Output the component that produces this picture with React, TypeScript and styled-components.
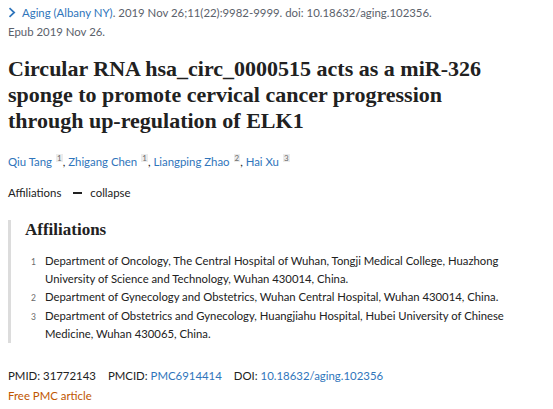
import React from "react";
import styled, { createGlobalStyle } from "styled-components";

const Global = createGlobalStyle`
  html, body { margin: 0; padding: 0; background: #fff; }
  body { font-family: Lato, "Liberation Sans", sans-serif; color: #212121; }
`;

const Page = styled.div`
  width: 504px;
  padding: 3px 8px 0 8px;
  display: flex;
  flex-direction: column;
`;

const Citation = styled.div`
  font-size: 11.4px;
  line-height: 19px;
  color: #5b616b;
`;

const Chevron = styled.span`
  display: inline-flex;
  width: 9px;
  margin-right: 5px;
  vertical-align: -1px;
`;

const Link = styled.a`
  color: #2f75bb;
  text-decoration: none;
`;

const Title = styled.h1`
  font-family: "Liberation Serif", serif;
  font-weight: 700;
  font-size: 22px;
  line-height: 26px;
  margin: 15px 0 0 0;
  color: #212121;
`;

const Authors = styled.div`
  margin-top: 18px;
  font-size: 11.4px;
  line-height: 19px;
`;

const Sup = styled.sup`
  display: inline-block;
  font-size: 8px;
  line-height: 8px;
  padding: 0 1px;
  margin-left: 4px;
  background: #ececec;
  color: #6b6b6b;
  vertical-align: 5px;
`;

const Toggle = styled.div`
  margin-top: 12px;
  font-size: 11.4px;
  line-height: 19px;
  color: #212121;
  display: flex;
  align-items: center;
`;

const Dash = styled.span`
  display: inline-block;
  width: 9px;
  height: 2px;
  margin: 1px 8px 0 12px;
  background: #212121;
`;

const AffBox = styled.div`
  margin-top: 18px;
  border-left: 3px solid #dcdcdc;
  padding: 0 0 0 14px;
`;

const AffHeading = styled.h3`
  font-family: "Liberation Serif", serif;
  font-weight: 700;
  font-size: 17px;
  line-height: 20px;
  margin: 0 0 12px 0;
`;

const AffList = styled.ol`
  list-style: none;
  margin: 0;
  padding: 0;
`;

const AffItem = styled.li`
  display: flex;
  font-size: 11.3px;
  line-height: 18px;
`;

const AffNum = styled.span`
  flex: 0 0 auto;
  width: 20px;
  padding-left: 6px;
  padding-top: 1px;
  font-size: 8.5px;
  color: #6b6b6b;
  box-sizing: border-box;
`;

const Ids = styled.div`
  margin-top: 23px;
  font-size: 11.4px;
  line-height: 20px;
  display: flex;
  gap: 12px;
`;

const Free = styled.div`
  font-size: 11.4px;
  line-height: 20px;
  color: #c05600;
`;

const authors = [
  ["Qiu Tang", "1"],
  ["Zhigang Chen", "1"],
  ["Liangping Zhao", "2"],
  ["Hai Xu", "3"],
];

const affs = [
  "Department of Oncology, The Central Hospital of Wuhan, Tongji Medical College, Huazhong University of Science and Technology, Wuhan 430014, China.",
  "Department of Gynecology and Obstetrics, Wuhan Central Hospital, Wuhan 430014, China.",
  "Department of Obstetrics and Gynecology, Huangjiahu Hospital, Hubei University of Chinese Medicine, Wuhan 430065, China.",
];

export default function App() {
  return (
    <>
      <Global />
      <Page>
        <Citation>
          <Chevron>
            <svg width="8" height="11" viewBox="0 0 8 11">
              <path d="M1.5 1.2 L6.2 5.5 L1.5 9.8" fill="none" stroke="#2f75bb" strokeWidth="1.7" />
            </svg>
          </Chevron>
          <Link href="#">Aging (Albany NY)</Link>. 2019 Nov 26;11(22):9982-9999. doi: 10.18632/aging.102356.
          <br />
          Epub 2019 Nov 26.
        </Citation>
        <Title>
          Circular RNA hsa_circ_0000515 acts as a miR-326 sponge to promote cervical cancer progression
          through up-regulation of ELK1
        </Title>
        <Authors>
          {authors.map(([n, s], i) => (
            <React.Fragment key={n}>
              <Link href="#">{n}</Link>
              <Sup>{s}</Sup>
              {i < authors.length - 1 ? ", " : ""}
            </React.Fragment>
          ))}
        </Authors>
        <Toggle>
          <span>Affiliations</span>
          <Dash />
          <span>collapse</span>
        </Toggle>
        <AffBox>
          <AffHeading>Affiliations</AffHeading>
          <AffList>
            {affs.map((a, i) => (
              <AffItem key={i}>
                <AffNum>{i + 1}</AffNum>
                <span>{a}</span>
              </AffItem>
            ))}
          </AffList>
        </AffBox>
        <Ids>
          <span>PMID: 31772143</span>
          <span>
            PMCID: <Link href="#">PMC6914414</Link>
          </span>
          <span>
            DOI: <Link href="#">10.18632/aging.102356</Link>
          </span>
        </Ids>
        <Free>Free PMC article</Free>
      </Page>
    </>
  );
}
